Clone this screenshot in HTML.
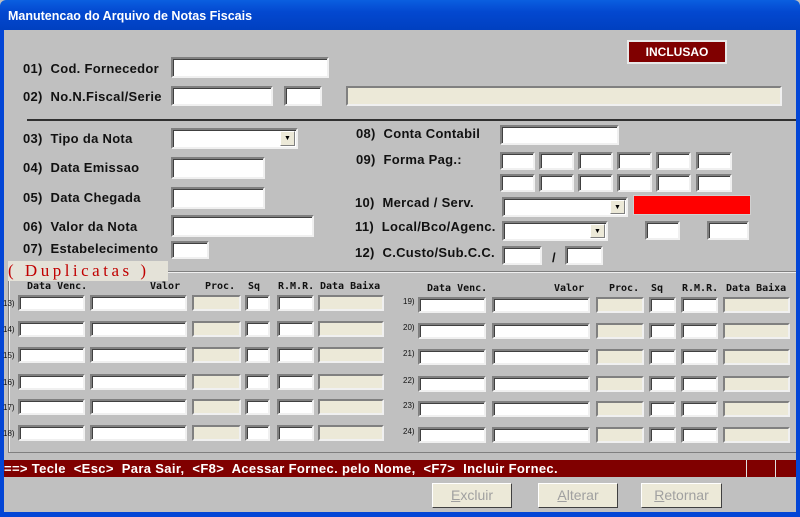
<!DOCTYPE html>
<html><head><meta charset="utf-8"><style>
*{margin:0;padding:0;box-sizing:border-box}
body{width:800px;height:517px;position:relative;overflow:hidden;background:#c0c0c0;font-family:"Liberation Sans",Arial,sans-serif}
.a{position:absolute}
.tb{left:0;top:0;width:800px;height:30px;background:linear-gradient(#0a5fe0,#0348d0 40%,#0040c0);border-radius:6px 6px 0 0}
.tt{left:8px;top:9px;color:#fff;font-weight:bold;font-size:12.5px}
.bl{background:#0346d6}
.l{font-weight:bold;font-size:13px;color:#111;white-space:nowrap;letter-spacing:0.3px}
.i{background:#fff;border:2px solid;border-color:#808080 #f0f0f0 #f0f0f0 #808080;box-shadow:inset 1px 1px 0 #404040}
.d{background:#ece9d8;border:2px solid;border-color:#808080 #f0f0f0 #f0f0f0 #808080}
.btn{border:1px solid;border-color:#fff #404040 #404040 #fff;background:#ece9d8;color:#a0a0a0;font-size:14px;text-align:center;line-height:23px}
.cb{position:absolute;right:1px;top:1px;bottom:1px;width:15px;background:#ece9d8;border:1px solid;border-color:#fff #808080 #808080 #fff;font-size:7px;text-align:center;line-height:14px}
.h{font-family:"DejaVu Sans Mono","Liberation Mono",monospace;font-weight:bold;font-size:10px;color:#111}
.n{font-size:8px;color:#111}
</style></head><body>
<div class="a tb"></div><div class="a tt">Manutencao do Arquivo de Notas Fiscais</div>
<div class="a bl" style="left:0;top:30px;width:4px;height:487px"></div>
<div class="a bl" style="left:796px;top:30px;width:4px;height:487px"></div>
<div class="a bl" style="left:0;top:512px;width:800px;height:5px"></div>

<div class="a" style="left:627px;top:40px;width:100px;height:24px;background:#800000;border:2px solid #e8e8e8;color:#fff;font-weight:bold;font-size:12px;text-align:center;line-height:20px">INCLUSAO</div>

<div class="a l" style="left:23px;top:61px">01)&nbsp; Cod. Fornecedor</div>
<div class="a i" style="left:171px;top:57px;width:158px;height:21px"></div>
<div class="a l" style="left:23px;top:89px">02)&nbsp; No.N.Fiscal/Serie</div>
<div class="a i" style="left:171px;top:86px;width:102px;height:20px"></div>
<div class="a i" style="left:284px;top:86px;width:38px;height:20px"></div>
<div class="a d" style="left:346px;top:86px;width:436px;height:20px"></div>
<div class="a" style="left:27px;top:119px;width:769px;height:2px;background:#303030"></div>

<div class="a l" style="left:23px;top:131px">03)&nbsp; Tipo da Nota</div>
<div class="a i" style="left:171px;top:128px;width:127px;height:21px"><div class="cb">▼</div></div>
<div class="a l" style="left:23px;top:160px">04)&nbsp; Data Emissao</div>
<div class="a i" style="left:171px;top:157px;width:94px;height:22px"></div>
<div class="a l" style="left:23px;top:190px">05)&nbsp; Data Chegada</div>
<div class="a i" style="left:171px;top:187px;width:94px;height:22px"></div>
<div class="a l" style="left:23px;top:219px">06)&nbsp; Valor da Nota</div>
<div class="a i" style="left:171px;top:215px;width:143px;height:22px"></div>
<div class="a l" style="left:23px;top:241px">07)&nbsp; Estabelecimento</div>
<div class="a i" style="left:171px;top:241px;width:38px;height:18px"></div>

<div class="a l" style="left:356px;top:126px">08)&nbsp; Conta Contabil</div>
<div class="a i" style="left:500px;top:125px;width:119px;height:20px"></div>
<div class="a l" style="left:356px;top:152px">09)&nbsp; Forma Pag.:</div>
<div class="a i" style="left:500px;top:152px;width:35px;height:18px"></div><div class="a i" style="left:539px;top:152px;width:35px;height:18px"></div><div class="a i" style="left:578px;top:152px;width:35px;height:18px"></div><div class="a i" style="left:617px;top:152px;width:35px;height:18px"></div><div class="a i" style="left:656px;top:152px;width:35px;height:18px"></div><div class="a i" style="left:696px;top:152px;width:36px;height:18px"></div>
<div class="a i" style="left:500px;top:174px;width:35px;height:18px"></div><div class="a i" style="left:539px;top:174px;width:35px;height:18px"></div><div class="a i" style="left:578px;top:174px;width:35px;height:18px"></div><div class="a i" style="left:617px;top:174px;width:35px;height:18px"></div><div class="a i" style="left:656px;top:174px;width:35px;height:18px"></div><div class="a i" style="left:696px;top:174px;width:36px;height:18px"></div>
<div class="a l" style="left:355px;top:195px">10)&nbsp; Mercad / Serv.</div>
<div class="a i" style="left:502px;top:197px;width:126px;height:20px"><div class="cb">▼</div></div>
<div class="a" style="left:633px;top:195px;width:118px;height:20px;background:#f00;border:1px solid #d0d0d0"></div>
<div class="a l" style="left:355px;top:219px">11)&nbsp; Local/Bco/Agenc.</div>
<div class="a i" style="left:502px;top:221px;width:106px;height:20px"><div class="cb">▼</div></div>
<div class="a i" style="left:645px;top:221px;width:35px;height:19px"></div>
<div class="a i" style="left:707px;top:221px;width:42px;height:19px"></div>
<div class="a l" style="left:355px;top:245px">12)&nbsp; C.Custo/Sub.C.C.</div>
<div class="a i" style="left:502px;top:246px;width:40px;height:19px"></div>
<div class="a l" style="left:552px;top:250px">/</div>
<div class="a i" style="left:565px;top:246px;width:38px;height:19px"></div>

<div class="a" style="left:8px;top:271px;width:788px;height:182px;border:1px solid #808080;border-right:none;box-shadow:inset 1px 1px 0 #f0f0f0"></div>
<div class="a" style="left:8px;top:261px;width:160px;height:20px;background:#e4e2d8;color:#c00000;font-family:'Liberation Serif',serif;font-size:17px;letter-spacing:3.5px;line-height:20px">( Duplicatas )</div>

<div class="a h" style="left:27px;top:281px">Data Venc.</div><div class="a h" style="left:150px;top:281px">Valor</div><div class="a h" style="left:205px;top:281px">Proc.</div><div class="a h" style="left:248px;top:281px">Sq</div><div class="a h" style="left:278px;top:281px">R.M.R.</div><div class="a h" style="left:320px;top:281px">Data Baixa</div>
<div class="a h" style="left:427px;top:283px">Data Venc.</div><div class="a h" style="left:554px;top:283px">Valor</div><div class="a h" style="left:609px;top:283px">Proc.</div><div class="a h" style="left:651px;top:283px">Sq</div><div class="a h" style="left:682px;top:283px">R.M.R.</div><div class="a h" style="left:726px;top:283px">Data Baixa</div>

<div class="a" style="left:0;top:295px">
<div class="a n" style="left:3px;top:4px">13)</div><div class="a n" style="left:3px;top:30px">14)</div><div class="a n" style="left:3px;top:56px">15)</div><div class="a n" style="left:3px;top:83px">16)</div><div class="a n" style="left:3px;top:108px">17)</div><div class="a n" style="left:3px;top:134px">18)</div>
</div>
<div class="a" style="left:0;top:297px">
<div class="a n" style="left:403px;top:0px">19)</div><div class="a n" style="left:403px;top:26px">20)</div><div class="a n" style="left:403px;top:52px">21)</div><div class="a n" style="left:403px;top:79px">22)</div><div class="a n" style="left:403px;top:104px">23)</div><div class="a n" style="left:403px;top:130px">24)</div>
</div>

<div class="a" style="left:0;top:295px"><div class="a i" style="left:18px;width:67px;height:16px"></div><div class="a i" style="left:90px;width:97px;height:16px"></div><div class="a d" style="left:192px;width:49px;height:16px"></div><div class="a i" style="left:245px;width:25px;height:16px"></div><div class="a i" style="left:277px;width:37px;height:16px"></div><div class="a d" style="left:318px;width:66px;height:16px"></div></div>
<div class="a" style="left:0;top:321px"><div class="a i" style="left:18px;width:67px;height:16px"></div><div class="a i" style="left:90px;width:97px;height:16px"></div><div class="a d" style="left:192px;width:49px;height:16px"></div><div class="a i" style="left:245px;width:25px;height:16px"></div><div class="a i" style="left:277px;width:37px;height:16px"></div><div class="a d" style="left:318px;width:66px;height:16px"></div></div>
<div class="a" style="left:0;top:347px"><div class="a i" style="left:18px;width:67px;height:16px"></div><div class="a i" style="left:90px;width:97px;height:16px"></div><div class="a d" style="left:192px;width:49px;height:16px"></div><div class="a i" style="left:245px;width:25px;height:16px"></div><div class="a i" style="left:277px;width:37px;height:16px"></div><div class="a d" style="left:318px;width:66px;height:16px"></div></div>
<div class="a" style="left:0;top:374px"><div class="a i" style="left:18px;width:67px;height:16px"></div><div class="a i" style="left:90px;width:97px;height:16px"></div><div class="a d" style="left:192px;width:49px;height:16px"></div><div class="a i" style="left:245px;width:25px;height:16px"></div><div class="a i" style="left:277px;width:37px;height:16px"></div><div class="a d" style="left:318px;width:66px;height:16px"></div></div>
<div class="a" style="left:0;top:399px"><div class="a i" style="left:18px;width:67px;height:16px"></div><div class="a i" style="left:90px;width:97px;height:16px"></div><div class="a d" style="left:192px;width:49px;height:16px"></div><div class="a i" style="left:245px;width:25px;height:16px"></div><div class="a i" style="left:277px;width:37px;height:16px"></div><div class="a d" style="left:318px;width:66px;height:16px"></div></div>
<div class="a" style="left:0;top:425px"><div class="a i" style="left:18px;width:67px;height:16px"></div><div class="a i" style="left:90px;width:97px;height:16px"></div><div class="a d" style="left:192px;width:49px;height:16px"></div><div class="a i" style="left:245px;width:25px;height:16px"></div><div class="a i" style="left:277px;width:37px;height:16px"></div><div class="a d" style="left:318px;width:66px;height:16px"></div></div>

<div class="a" style="left:0;top:297px"><div class="a i" style="left:418px;width:68px;height:16px"></div><div class="a i" style="left:492px;width:98px;height:16px"></div><div class="a d" style="left:596px;width:48px;height:16px"></div><div class="a i" style="left:649px;width:27px;height:16px"></div><div class="a i" style="left:681px;width:37px;height:16px"></div><div class="a d" style="left:723px;width:67px;height:16px"></div></div>
<div class="a" style="left:0;top:323px"><div class="a i" style="left:418px;width:68px;height:16px"></div><div class="a i" style="left:492px;width:98px;height:16px"></div><div class="a d" style="left:596px;width:48px;height:16px"></div><div class="a i" style="left:649px;width:27px;height:16px"></div><div class="a i" style="left:681px;width:37px;height:16px"></div><div class="a d" style="left:723px;width:67px;height:16px"></div></div>
<div class="a" style="left:0;top:349px"><div class="a i" style="left:418px;width:68px;height:16px"></div><div class="a i" style="left:492px;width:98px;height:16px"></div><div class="a d" style="left:596px;width:48px;height:16px"></div><div class="a i" style="left:649px;width:27px;height:16px"></div><div class="a i" style="left:681px;width:37px;height:16px"></div><div class="a d" style="left:723px;width:67px;height:16px"></div></div>
<div class="a" style="left:0;top:376px"><div class="a i" style="left:418px;width:68px;height:16px"></div><div class="a i" style="left:492px;width:98px;height:16px"></div><div class="a d" style="left:596px;width:48px;height:16px"></div><div class="a i" style="left:649px;width:27px;height:16px"></div><div class="a i" style="left:681px;width:37px;height:16px"></div><div class="a d" style="left:723px;width:67px;height:16px"></div></div>
<div class="a" style="left:0;top:401px"><div class="a i" style="left:418px;width:68px;height:16px"></div><div class="a i" style="left:492px;width:98px;height:16px"></div><div class="a d" style="left:596px;width:48px;height:16px"></div><div class="a i" style="left:649px;width:27px;height:16px"></div><div class="a i" style="left:681px;width:37px;height:16px"></div><div class="a d" style="left:723px;width:67px;height:16px"></div></div>
<div class="a" style="left:0;top:427px"><div class="a i" style="left:418px;width:68px;height:16px"></div><div class="a i" style="left:492px;width:98px;height:16px"></div><div class="a d" style="left:596px;width:48px;height:16px"></div><div class="a i" style="left:649px;width:27px;height:16px"></div><div class="a i" style="left:681px;width:37px;height:16px"></div><div class="a d" style="left:723px;width:67px;height:16px"></div></div>

<div class="a" style="left:4px;top:460px;width:792px;height:17px;background:#800000;color:#fff;font-weight:bold;font-size:13px;letter-spacing:0.35px;line-height:17px;white-space:nowrap">==&gt; Tecle&nbsp; &lt;Esc&gt;&nbsp; Para Sair,&nbsp; &lt;F8&gt;&nbsp; Acessar Fornec. pelo Nome,&nbsp; &lt;F7&gt;&nbsp; Incluir Fornec.</div>
<div class="a" style="left:746px;top:460px;width:1px;height:17px;background:#e0e0e0"></div>
<div class="a" style="left:775px;top:460px;width:1px;height:17px;background:#e0e0e0"></div>

<div class="a btn" style="left:432px;top:483px;width:80px;height:25px"><u>E</u>xcluir</div>
<div class="a btn" style="left:538px;top:483px;width:80px;height:25px"><u>A</u>lterar</div>
<div class="a btn" style="left:641px;top:483px;width:81px;height:25px"><u>R</u>etornar</div>
</body></html>
